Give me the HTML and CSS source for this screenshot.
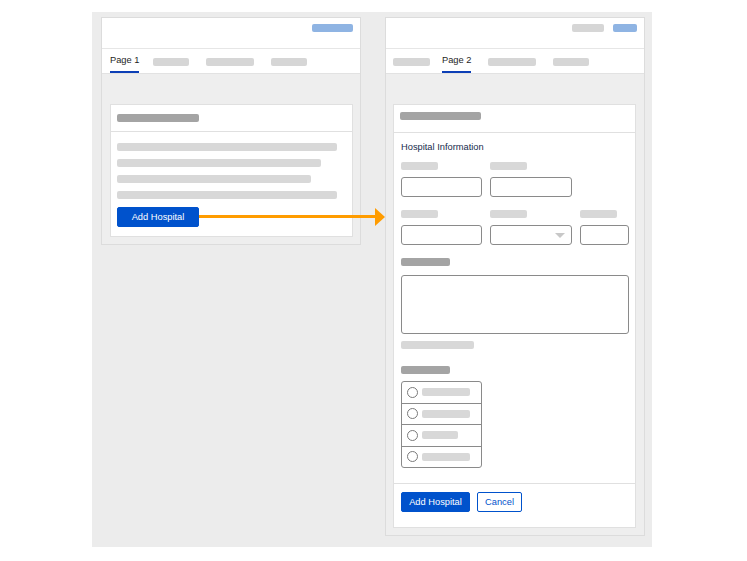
FILE: index.html
```html
<!DOCTYPE html>
<html>
<head>
<meta charset="utf-8">
<link rel="stylesheet" href="styles.css">
</head>
<body>
<div class="canvas">
  <section class="panel panel-left">
    <div class="panel-header">
      <span class="pill pill-blue w41"></span>
    </div>
    <nav class="tabs tabs-left">
      <span class="tab active">Page 1</span>
      <span class="tab-ph w36"></span>
      <span class="tab-ph w48"></span>
      <span class="tab-ph w36"></span>
    </nav>
    <div class="panel-body body-left">
      <div class="card">
        <div class="card-header header-left"><span class="ph-dark w82"></span></div>
        <div class="card-body body-lines">
          <span class="line w220"></span>
          <span class="line w204"></span>
          <span class="line w194"></span>
          <span class="line w220"></span>
          <button class="btn btn-primary btn-wide">Add Hospital</button>
        </div>
      </div>
    </div>
  </section>

  <section class="panel panel-right">
    <div class="panel-header header-right">
      <span class="pill pill-gray w32"></span>
      <span class="pill pill-blue w24"></span>
    </div>
    <nav class="tabs tabs-right">
      <span class="tab-ph w37"></span>
      <span class="tab active">Page 2</span>
      <span class="tab-ph w48"></span>
      <span class="tab-ph w36"></span>
    </nav>
    <div class="panel-body body-right">
      <div class="card">
        <div class="card-header header-form"><span class="ph-dark w81"></span></div>
        <div class="card-body form-body">
          <div class="form-title">Hospital Information</div>
          <div class="grid row-first">
            <div class="field"><span class="label w37"></span><span class="input"></span></div>
            <div class="field"><span class="label w37"></span><span class="input"></span></div>
          </div>
          <div class="grid row-next">
            <div class="field"><span class="label w37"></span><span class="input"></span></div>
            <div class="field"><span class="label w37"></span><span class="input select"><span class="caret"></span></span></div>
            <div class="field"><span class="label w37"></span><span class="input"></span></div>
          </div>
          <span class="ph-dark w49 dark-label"></span>
          <span class="textarea"></span>
          <span class="helper w73"></span>
          <span class="ph-dark w49 dark-label2"></span>
          <div class="radio-list">
            <div class="radio-row"><span class="radio"></span><span class="opt w48"></span></div>
            <div class="radio-row"><span class="radio"></span><span class="opt w48"></span></div>
            <div class="radio-row"><span class="radio"></span><span class="opt w36"></span></div>
            <div class="radio-row"><span class="radio"></span><span class="opt w48"></span></div>
          </div>
        </div>
        <div class="card-footer">
          <button class="btn btn-primary">Add Hospital</button>
          <button class="btn btn-secondary">Cancel</button>
        </div>
      </div>
    </div>
  </section>

  <svg class="arrow" width="187" height="20" viewBox="0 0 187 20">
    <rect x="0" y="8" width="177" height="3" fill="#ff9c00"/>
    <polygon points="176,1 186,10 176,19" fill="#ff9c00"/>
  </svg>
</div>
</body>
</html>
```

FILE: styles.css
```css
body {
  margin: 0;
  background: #ffffff;
  font-family: "Liberation Sans", Arial, sans-serif;
}

.canvas {
  position: relative;
  width: 560px;
  height: 535px;
  margin: 12px 0 0 92px;
  padding: 5px 0 0 9px;
  box-sizing: border-box;
  background: #ececec;
  display: flex;
  align-items: flex-start;
  gap: 24px;
}

.panel {
  width: 260px;
  box-sizing: border-box;
  border: 1px solid #dcdcdc;
  background: #eeeeee;
}

.panel-header {
  height: 24px;
  background: #ffffff;
  border-bottom: 1px solid #e6e6e6;
  display: flex;
  justify-content: flex-end;
  align-items: flex-start;
  padding: 6px 7px 0 0;
  gap: 9px;
}

.pill {
  display: block;
  height: 8px;
  border-radius: 2px;
}
.pill-blue { background: #8fb4e3; }
.pill-gray { background: #d6d6d6; }

.tabs {
  height: 24px;
  background: #ffffff;
  border-bottom: 1px solid #e2e2e2;
  display: flex;
  align-items: flex-start;
  gap: 17px;
}
.tabs-left { padding-left: 8px; }
.tabs-right { padding-left: 7px; }

.tab {
  font-size: 9.3px;
  line-height: 12px;
  color: #1e1e1e;
  padding-top: 5px;
  padding-bottom: 5px;
  border-bottom: 2px solid transparent;
}
.tab.active { border-bottom-color: #0c3fb6; }
.tabs-left .tab.active { margin-right: -3px; }
.tabs-right .tab-ph:first-child { margin-right: -5px; }

.tab-ph {
  display: block;
  height: 8px;
  margin-top: 9px;
  background: #d6d6d6;
  border-radius: 2px;
}

.panel-body { padding-top: 30px; padding-bottom: 7px; }
.body-left { padding-left: 8px; padding-right: 7px; }
.body-right { padding-left: 7px; padding-right: 8px; }

.card {
  background: #ffffff;
  border: 1px solid #e0e0e0;
}

.card-header {
  border-bottom: 1px solid #e0e0e0;
}
.header-left { padding: 9px 6px 9px; }
.header-form { padding: 7px 6px 12px; }

.ph-dark {
  display: block;
  height: 8px;
  background: #a4a4a4;
  border-radius: 2px;
}

.body-lines {
  padding: 11px 6px 9px;
  display: flex;
  flex-direction: column;
  align-items: flex-start;
}
.line {
  display: block;
  height: 8px;
  margin-bottom: 8px;
  background: #d8d8d8;
  border-radius: 2px;
}

.btn {
  font-family: "Liberation Sans", Arial, sans-serif;
  font-size: 9.3px;
  height: 20px;
  line-height: 18px;
  border-radius: 2px;
  padding: 0;
  cursor: pointer;
}
.btn-primary {
  background: #0052cc;
  color: #ffffff;
  border: 1px solid #0052cc;
}
.btn-secondary {
  background: #ffffff;
  color: #0052cc;
  border: 1px solid #0052cc;
}
.btn-wide { width: 82px; }

.form-body {
  padding: 8px 7px 15px;
  display: flex;
  flex-direction: column;
  align-items: flex-start;
}

.form-title {
  font-size: 9.3px;
  line-height: 12px;
  color: #172b4d;
}

.grid {
  display: grid;
  grid-template-columns: 81px 82px 49px;
  column-gap: 8px;
}
.row-first { margin-top: 9px; }
.row-next { margin-top: 13px; }

.field {
  display: flex;
  flex-direction: column;
  align-items: flex-start;
}
.label {
  display: block;
  height: 8px;
  background: #d8d8d8;
  border-radius: 2px;
  margin-bottom: 7px;
}
.input {
  position: relative;
  display: block;
  width: 100%;
  height: 20px;
  box-sizing: border-box;
  border: 1px solid #8a8a8a;
  border-radius: 3px;
  background: #ffffff;
}
.caret {
  position: absolute;
  right: 6px;
  top: 7px;
  width: 0;
  height: 0;
  border-left: 5px solid transparent;
  border-right: 5px solid transparent;
  border-top: 5px solid #c8c8c8;
}

.dark-label { margin-top: 13px; }
.textarea {
  display: block;
  margin-top: 9px;
  width: 228px;
  height: 59px;
  box-sizing: border-box;
  border: 1px solid #8a8a8a;
  border-radius: 3px;
}
.helper {
  display: block;
  margin-top: 7px;
  height: 8px;
  background: #d8d8d8;
  border-radius: 2px;
}
.dark-label2 { margin-top: 17px; }

.radio-list {
  margin-top: 7px;
  width: 81px;
  box-sizing: border-box;
  border: 1px solid #8a8a8a;
  border-radius: 3px;
}
.radio-row {
  height: 20.5px;
  display: flex;
  align-items: center;
  padding-left: 5px;
  gap: 4px;
}
.radio-row + .radio-row { border-top: 1px solid #8a8a8a; }
.radio {
  display: block;
  width: 11px;
  height: 11px;
  box-sizing: border-box;
  border: 1px solid #7a7a7a;
  border-radius: 50%;
}
.opt {
  display: block;
  height: 8px;
  background: #d8d8d8;
  border-radius: 2px;
}

.card-footer {
  border-top: 1px solid #e0e0e0;
  padding: 8px 7px 15px;
  display: flex;
  gap: 7px;
}
.card-footer .btn-primary { width: 69px; }
.card-footer .btn-secondary { width: 45px; }

.arrow {
  position: absolute;
  left: 107px;
  top: 195px;
}

.w24 { width: 24px; }
.w32 { width: 32px; }
.w36 { width: 36px; }
.w37 { width: 37px; }
.w41 { width: 41px; }
.w48 { width: 48px; }
.w49 { width: 49px; }
.w73 { width: 73px; }
.w81 { width: 81px; }
.w82 { width: 82px; }
.w194 { width: 194px; }
.w204 { width: 204px; }
.w220 { width: 220px; }
```
